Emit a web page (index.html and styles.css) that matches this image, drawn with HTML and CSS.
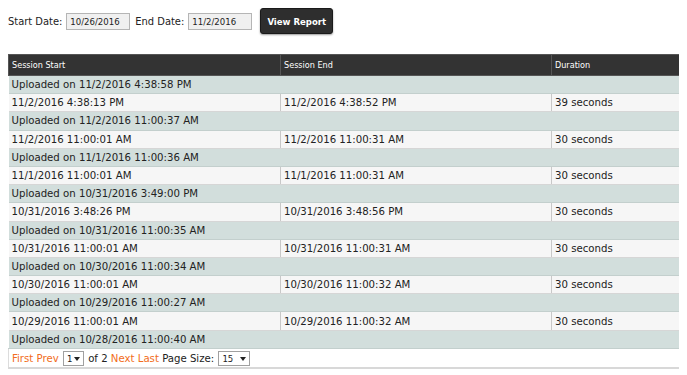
FILE: index.html
```html
<!DOCTYPE html>
<html lang="en">
<head>
  <meta charset="UTF-8">
  <title>Session Report</title>
  <link rel="stylesheet" href="styles.css">
</head>
<body>
  <form class="filter" onsubmit="return false">
    <label for="start-date">Start Date:</label>
    <input type="text" id="start-date" class="date-input" value="10/26/2016">
    <label for="end-date" class="end-label">End Date:</label>
    <input type="text" id="end-date" class="date-input" value="11/2/2016">
    <button type="submit" class="btn">View Report</button>
  </form>

  <table class="report">
    <colgroup>
      <col class="col-start">
      <col class="col-end">
      <col class="col-duration">
    </colgroup>
    <thead>
      <tr>
        <th>Session Start</th>
        <th>Session End</th>
        <th>Duration</th>
      </tr>
    </thead>
    <tbody>
      <tr class="group"><td colspan="3">Uploaded on 11/2/2016 4:38:58 PM</td></tr>
      <tr class="item"><td>11/2/2016 4:38:13 PM</td><td>11/2/2016 4:38:52 PM</td><td>39 seconds</td></tr>
      <tr class="group"><td colspan="3">Uploaded on 11/2/2016 11:00:37 AM</td></tr>
      <tr class="item"><td>11/2/2016 11:00:01 AM</td><td>11/2/2016 11:00:31 AM</td><td>30 seconds</td></tr>
      <tr class="group"><td colspan="3">Uploaded on 11/1/2016 11:00:36 AM</td></tr>
      <tr class="item"><td>11/1/2016 11:00:01 AM</td><td>11/1/2016 11:00:31 AM</td><td>30 seconds</td></tr>
      <tr class="group"><td colspan="3">Uploaded on 10/31/2016 3:49:00 PM</td></tr>
      <tr class="item"><td>10/31/2016 3:48:26 PM</td><td>10/31/2016 3:48:56 PM</td><td>30 seconds</td></tr>
      <tr class="group"><td colspan="3">Uploaded on 10/31/2016 11:00:35 AM</td></tr>
      <tr class="item"><td>10/31/2016 11:00:01 AM</td><td>10/31/2016 11:00:31 AM</td><td>30 seconds</td></tr>
      <tr class="group"><td colspan="3">Uploaded on 10/30/2016 11:00:34 AM</td></tr>
      <tr class="item"><td>10/30/2016 11:00:01 AM</td><td>10/30/2016 11:00:32 AM</td><td>30 seconds</td></tr>
      <tr class="group"><td colspan="3">Uploaded on 10/29/2016 11:00:27 AM</td></tr>
      <tr class="item"><td>10/29/2016 11:00:01 AM</td><td>10/29/2016 11:00:32 AM</td><td>30 seconds</td></tr>
      <tr class="group"><td colspan="3">Uploaded on 10/28/2016 11:00:40 AM</td></tr>
    </tbody>
    <tfoot>
      <tr class="pager">
        <td colspan="3">
          <a href="#">First</a> <a href="#">Prev</a>
          <span class="select-wrap">
            <select class="pager-select page-no">
              <option>1</option>
              <option>2</option>
            </select>
          </span>
          of 2
          <a href="#">Next</a> <a href="#">Last</a>
          Page Size:
          <span class="select-wrap">
            <select class="pager-select page-size">
              <option>15</option>
              <option>30</option>
              <option>50</option>
            </select>
          </span>
        </td>
      </tr>
    </tfoot>
  </table>
</body>
</html>
```

FILE: styles.css
```css
body {
  margin: 8px;
  font-family: Tahoma, "DejaVu Sans Condensed", "Liberation Sans", sans-serif;
  font-size: 11.3px;
  color: #222;
  background-color: #fff;
}

/* filter bar */
.filter {
  display: flex;
  align-items: center;
  height: 26px;
  font-size: 11px;
}
.filter label {
  margin-right: 4px;
}
.end-label {
  margin-left: 5px;
}
.date-input {
  width: 64px;
  height: 17px;
  box-sizing: border-box;
  padding: 0 3px;
  border: 1px solid #b5b5b5;
  background-color: #f0f0f0;
  font-family: inherit;
  font-size: 9.5px;
  color: #222;
}
.btn {
  margin-left: 8px;
  width: 73px;
  height: 26px;
  padding: 0;
  white-space: nowrap;
  border: 1px solid #1a1a1a;
  border-radius: 3px;
  background-color: #2e2e2e;
  box-shadow: 0 1px 2px rgba(0, 0, 0, 0.4);
  color: #fff;
  font-family: inherit;
  font-size: 9.5px;
  font-weight: bold;
  cursor: pointer;
}

/* report table */
.report {
  margin-top: 20px;
  width: 672px;
  border-collapse: collapse;
  table-layout: fixed;
  border-right: 1px solid #c4c4c4;
}
.col-start { width: 272px; }
.col-end { width: 271px; }
.col-duration { width: 129px; }

.report th {
  height: 20px;
  padding: 0 3px;
  background-color: #333;
  border: 1px solid #555;
  color: #fff;
  font-size: 9px;
  font-weight: normal;
  text-align: left;
}
.report td {
  height: 18.2px;
  padding: 0 3px;
  box-sizing: border-box;
  white-space: nowrap;
}
.group td {
  background-color: #d2dedc;
  border-bottom: 1px solid #c3cfcd;
}
.item td {
  background-color: #f6f6f6;
  border-bottom: 1px solid #d6d6d6;
  border-left: 1px solid #c8c8c8;
}
.item td:first-child {
  border-left: none;
}

.pager td {
  height: 20px;
  background-color: #fff;
  border-left: 1px solid #dcdcdc;
  border-bottom: 2px solid #d8d8d8;
}
.pager a {
  color: #f26d21;
  text-decoration: none;
}
.select-wrap {
  position: relative;
  display: inline-block;
  vertical-align: middle;
  margin: 0 1px;
}
.select-wrap::after {
  content: "";
  position: absolute;
  right: 4px;
  top: 6px;
  border-left: 3px solid transparent;
  border-right: 3px solid transparent;
  border-top: 4px solid #222;
  pointer-events: none;
}
.pager-select {
  -webkit-appearance: none;
  appearance: none;
  height: 15px;
  padding: 0 0 0 3px;
  border: 1px solid #a0a0a0;
  border-radius: 0;
  background-color: #fff;
  font-family: inherit;
  font-size: 9.5px;
  color: #222;
}
.page-no { width: 21px; }
.page-size { width: 32px; }
```
